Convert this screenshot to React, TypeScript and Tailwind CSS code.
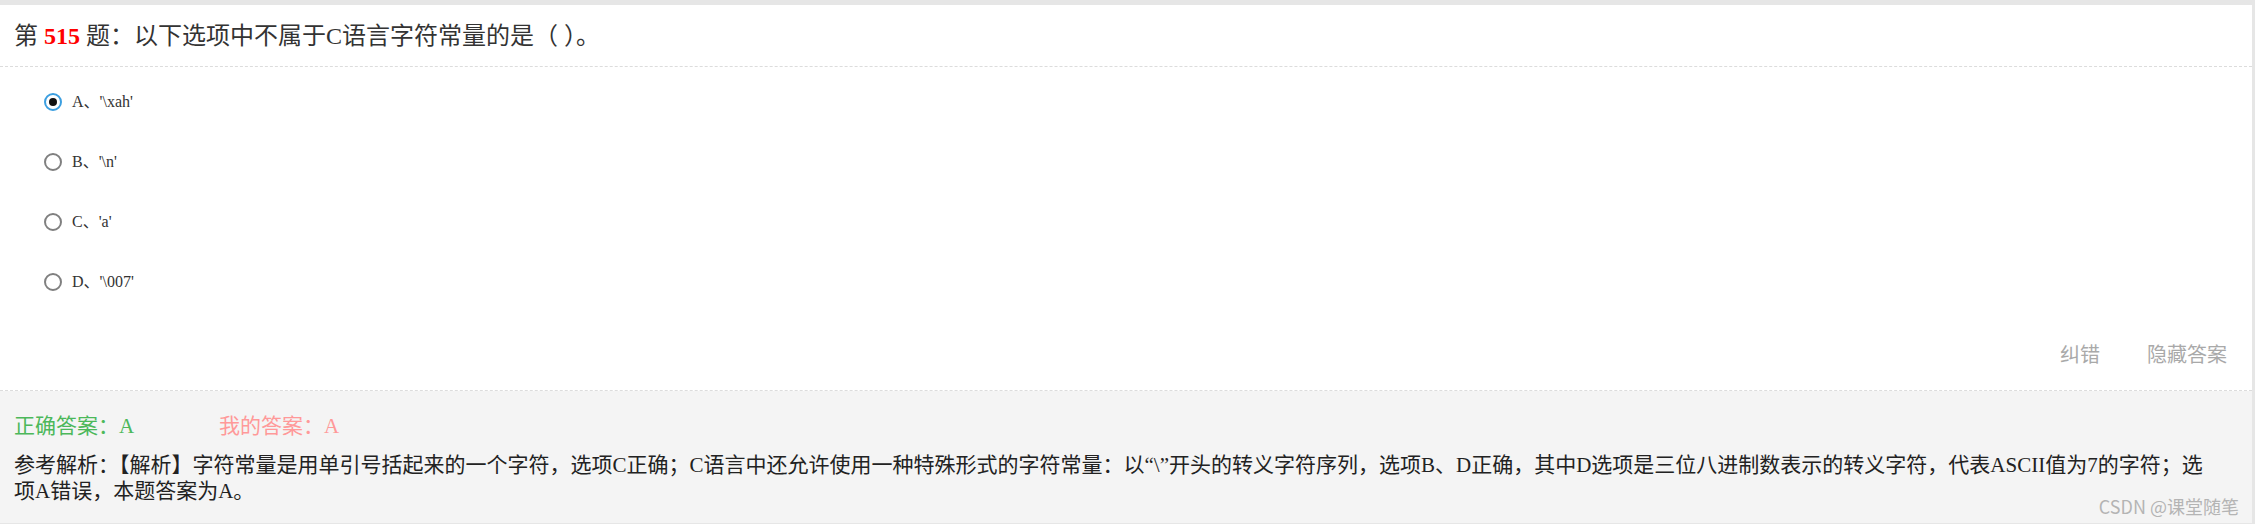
import React from 'react';

const options = [
  { key: 'A', text: "'\\xah'", checked: true },
  { key: 'B', text: "'\\n'", checked: false },
  { key: 'C', text: "'a'", checked: false },
  { key: 'D', text: "'\\007'", checked: false },
];

function Radio({ checked }: { checked: boolean }) {
  if (checked) {
    return (
      <span className="flex h-[18px] w-[18px] items-center justify-center rounded-full border-2 border-[#3c9fe0] bg-white">
        <span className="h-[8px] w-[8px] rounded-full bg-[#111]" />
      </span>
    );
  }
  return <span className="h-[18px] w-[18px] rounded-full border-2 border-[#808080] bg-white" />;
}

export default function App() {
  const font = 'font-["Liberation_Serif","Noto_Sans_CJK_SC",serif]';
  return (
    <div className="relative h-[524px] w-[2255px] overflow-hidden bg-[#e6e6e6] pr-[3px] pt-[5px]">
      <div className="bg-white">
        {/* question title */}
        <div
          className={`flex h-[62px] items-center border-b border-dashed border-[#dcdcdc] px-[14px] text-[24px] leading-[30px] text-[#333] ${font}`}
        >
          第 <span className="mx-[6px] font-bold text-[#ff0000]">515</span>题：以下选项中不属于C语言字符常量的是（ ）。
        </div>

        {/* options */}
        <div className="pt-[5px]">
          {options.map((o) => (
            <div key={o.key} className="flex h-[60px] items-center pl-[44px]">
              <Radio checked={o.checked} />
              <span className={`ml-[10px] text-[16px] leading-[22px] text-[#333] ${font}`}>
                {o.key}、{o.text}
              </span>
            </div>
          ))}
        </div>

        {/* actions */}
        <div className='flex h-[79px] items-start justify-end gap-[47px] border-b border-dashed border-[#dcdcdc] pr-[25px] pt-[28px] font-["Noto_Sans_CJK_SC",sans-serif] text-[20px] leading-[28px] text-[#a9a9a9]'>
          <span>纠错</span>
          <span>隐藏答案</span>
        </div>
      </div>

      {/* answer panel */}
      <div className={`h-[132px] bg-[#f4f4f4] pl-[14px] pr-[40px] pt-[21px] text-[21px] ${font}`}>
        <div className="flex leading-[28px]">
          <span className="w-[205px] text-[#4cb85a]">正确答案：A</span>
          <span className="text-[#ff9999]">我的答案：A</span>
        </div>
        <p className="mt-[12px] leading-[26px] text-[#222]">
          参考解析：【解析】字符常量是用单引号括起来的一个字符，选项C正确；C语言中还允许使用一种特殊形式的字符常量：以“\”开头的转义字符序列，选项B、D正确，其中D选项是三位八进制数表示的转义字符，代表ASCII值为7的字符；选项A错误，本题答案为A。
        </p>
      </div>

      <span className='absolute bottom-[6px] right-[16px] font-["Noto_Sans_CJK_SC",sans-serif] text-[18px] leading-[24px] text-[#b4b4b4]'>
        CSDN @课堂随笔
      </span>
    </div>
  );
}
